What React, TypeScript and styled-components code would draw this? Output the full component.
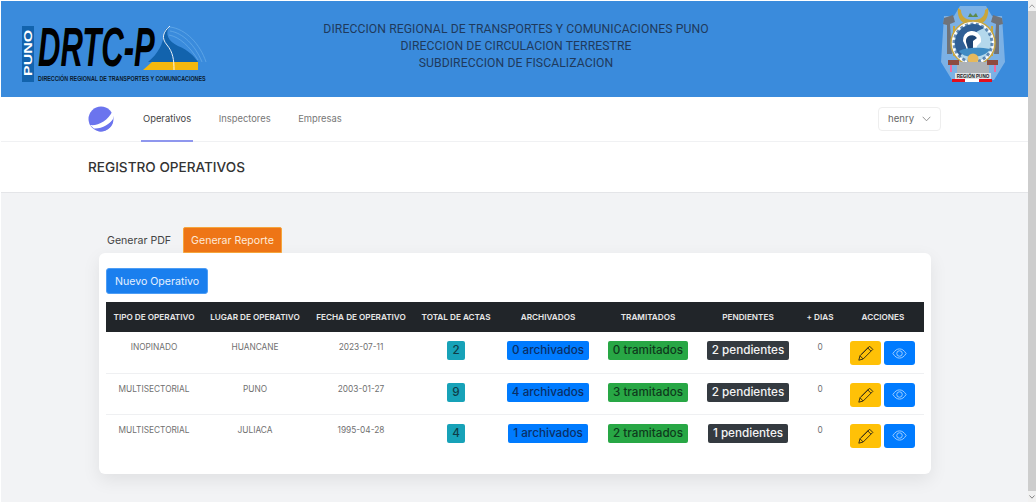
import styled, { createGlobalStyle } from 'styled-components'

const GlobalStyle = createGlobalStyle`
  html, body {
    margin: 0;
    padding: 0;
    overflow: hidden;
    background: #fff;
  }
  * { box-sizing: border-box; }
`

const Screen = styled.div`
  display: flex;
  width: 1036px;
  height: 502px;
  font-family: Inter, 'Noto Sans', sans-serif;
`

const Main = styled.div`
  flex: 1;
  min-width: 0;
  padding: 1px 0 0 1px;
  display: flex;
  flex-direction: column;
`

const ScrollRail = styled.div`
  width: 8px;
  background: #f1f1f1;
  display: flex;
  flex-direction: column;
`

const ScrollArrow = styled.div`
  height: 11px;
  display: flex;
  align-items: center;
  justify-content: center;
`

const ScrollThumb = styled.div`
  flex: 1;
  background: #cdcdcd;
`

const Banner = styled.header`
  height: 96px;
  background: #3a8bdc;
  display: flex;
  align-items: center;
  padding: 0 22px 0 21px;
`

const LogoBox = styled.div`
  display: flex;
  padding-bottom: 2px;
`

const CrestBox = styled.div`
  display: flex;
  padding-bottom: 12px;
`

const BannerText = styled.div`
  flex: 1;
  padding: 0 116px 6px 0;
  text-align: center;
  font-family: Roboto, sans-serif;
  font-size: 12.2px;
  line-height: 17px;
  letter-spacing: 0.08px;
  color: #1f3a5c;
`

const Nav = styled.nav`
  height: 45px;
  background: #fff;
  border-bottom: 1px solid #f0f1f3;
  display: flex;
  align-items: stretch;
  padding: 0 87px;
`

const NavLogo = styled.div`
  display: flex;
  align-items: center;
  margin-right: 27px;
  padding-bottom: 1px;
`

const NavTabs = styled.div`
  display: flex;
  flex: 1;
`

const NavTab = styled.a<{ $active?: boolean }>`
  display: flex;
  align-items: center;
  padding: 0 2px;
  margin-right: 23.5px;
  margin-bottom: -1px;
  font-size: 9.4px;
  color: ${(p) => (p.$active ? '#444' : '#777')};
  border-bottom: 2px solid ${(p) => (p.$active ? '#8f97ee' : 'transparent')};
`

const UserSelect = styled.div`
  align-self: center;
  width: 63px;
  height: 24px;
  margin-top: -1px;
  border: 1px solid #eeeeee;
  border-radius: 4px;
  display: flex;
  align-items: center;
  justify-content: center;
  gap: 8px;
  font-size: 9.6px;
  color: #666;
`

const TitleBar = styled.div`
  height: 51px;
  background: #fff;
  border-bottom: 1px solid #e4e5e8;
  display: flex;
  align-items: center;
  padding-left: 87px;
  font-size: 13.6px;
  font-weight: 500;
  color: #333;
`

const Body = styled.main`
  flex: 1;
  background: #f2f3f5;
  padding: 34px 97px 0 98px;
`

const Tabs = styled.div`
  display: flex;
  align-items: stretch;
  height: 26px;
  padding-left: 8px;
`

const PlainTab = styled.div`
  display: flex;
  align-items: center;
  width: 76px;
  font-size: 10.6px;
  color: #444;
`

const ReportTab = styled.div`
  display: flex;
  align-items: center;
  justify-content: center;
  width: 99px;
  background: #ee7516;
  border: 1px solid #f5a53c;
  border-radius: 2px 2px 0 0;
  font-size: 10.6px;
  color: #fde9d6;
`

const Card = styled.section`
  height: 221px;
  background: #fff;
  border-radius: 6px;
  padding: 15px 7px 0;
  box-shadow: 0 6px 18px rgba(0, 0, 0, 0.08);
`

const NewButton = styled.button`
  display: block;
  width: 102px;
  height: 26px;
  padding: 0;
  background: #1a7fee;
  border: 1px solid #4d9df5;
  border-radius: 3px;
  font-family: inherit;
  font-size: 10.6px;
  color: #e4f0ff;
`

const Table = styled.table`
  width: 818px;
  margin-top: 8px;
  border-collapse: collapse;
  table-layout: fixed;
`

const HeadCell = styled.th`
  height: 30px;
  padding: 0;
  background: #212529;
  font-size: 8.2px;
  font-weight: 600;
  color: #e8e8e8;
  text-align: center;
`

const Row = styled.tr`
  height: 41px;
  border-bottom: 1px solid #eff0f2;

  &:last-child {
    border-bottom: none;
  }
`

const Cell = styled.td`
  padding: 9px 0 0;
  font-size: 8.3px;
  line-height: 12px;
  color: #707070;
  text-align: center;
  vertical-align: top;
`

const Badge = styled.span<{ $bg: string; $fg: string }>`
  display: inline-block;
  height: 19px;
  padding: 0 5px;
  background: ${(p) => p.$bg};
  border-radius: 2px;
  font-size: 11.7px;
  font-weight: 500;
  line-height: 19px;
  color: ${(p) => p.$fg};
  white-space: nowrap;
`

const Actions = styled.div`
  display: flex;
  gap: 3px;
  padding-left: 8px;
`

const IconButton = styled.button<{ $bg: string }>`
  display: flex;
  align-items: center;
  justify-content: center;
  width: 31px;
  height: 24px;
  padding: 0;
  border: none;
  border-radius: 3px;
  background: ${(p) => p.$bg};
`

const DrtcLogo = () => (
  <svg width="186" height="68" viewBox="0 -12 186 68">
    <rect x="0" y="0" width="12" height="56" fill="#1263ad" />
    <text
      transform="translate(10 50) rotate(-90) scale(1.45 1)"
      fontFamily="Liberation Sans"
      fontWeight="700"
      fontSize="11"
      fill="#fff"
    >
      PUNO
    </text>
    <g fill="none" stroke="#69aeea" strokeWidth="0.7">
      <path d="M148 1 C164 3 178 18 184 36" />
      <path d="M148 5 C161 7 173 19 180 36" />
      <path d="M147 9 C158 11 168 21 176 34" />
    </g>
    <path d="M126 36 C136 28 142 16 141 10 C142 5 144 2 147 1 C143 8 146 15 156 20 C166 24 172 30 176 36 Z" fill="#1263ad" />
    <path d="M121 44 L130 36 L176 36 L176 44 Z" fill="#f4b80f" />
    <path d="M148 0 C141 6 139 12 145 19 C151 26 152 34 152 44" fill="none" stroke="#fff" strokeWidth="0.9" />
    <text
      transform="translate(16 40) scale(0.555 1)"
      fontFamily="Liberation Sans"
      fontWeight="700"
      fontStyle="italic"
      fontSize="56"
      fill="#000"
    >
      DRTC-P
    </text>
    <text
      transform="translate(16 55) scale(0.77 1)"
      fontFamily="Liberation Sans"
      fontWeight="700"
      fontSize="7"
      fill="#0b1c30"
    >
      DIRECCIÓN REGIONAL DE TRANSPORTES Y COMUNICACIONES
    </text>
  </svg>
)

const Crest = () => (
  <svg width="66" height="78" viewBox="0 0 66 78">
    <path d="M4 12 L14 12 L20 2 L46 2 L52 12 L62 12 L65 58 L54 76 L12 76 L1 58 Z" fill="#e2eaf2" opacity="0.4" />
    <path d="M18 4 C17 12 20 18 26 20 C31 22 35 22 40 20 C46 18 49 12 48 4 L45 6 C45 12 41 16 33 16 C25 16 21 12 21 6 Z" fill="#c9a63a" />
    <path d="M28 13 L30 9 L33 12 L36 9 L38 13 Z" fill="#5d8a4a" />
    <path d="M4 14 L13 11 L15 18 L10 20 L12 50 L7 50 L7 21 L3 20 Z" fill="#6f737a" />
    <path d="M62 14 L53 11 L51 18 L56 20 L54 50 L59 50 L59 21 L63 20 Z" fill="#6f737a" />
    <rect x="13" y="22" width="2" height="30" fill="#c9a63a" />
    <rect x="51" y="22" width="2" height="30" fill="#c9a63a" />
    <circle cx="33" cy="39" r="22" fill="#fff" stroke="#c4a544" strokeWidth="1.5" />
    <circle cx="33" cy="39" r="19" fill="#b4d8ec" />
    <path d="M33 20 A19 19 0 0 0 20 52 L26 46 L27 34 L38 27 L44 24 A19 19 0 0 0 33 20 Z" fill="#2f5f96" />
    <circle cx="33" cy="39" r="19" fill="none" stroke="#2f5f96" strokeWidth="3" strokeDasharray="3 2.4" opacity="0.7" />
    <path d="M23 37 A9 9 0 0 1 41 35 L41 38 L37 42 L36 47 L28 47 Z" fill="#fff" />
    <path d="M26 38 A6 6 0 0 1 37 34 L33 37 L33 45 L28 45 Z" fill="#1e4574" />
    <path d="M19 47 C26 43 40 43 50 45 C46 54 24 56 19 47 Z" fill="#3f8cc4" />
    <circle cx="33" cy="55" r="5.5" fill="#e6b95c" />
    <rect x="17" y="58" width="32" height="11" fill="#aeb2b6" />
    <rect x="8" y="56" width="11" height="5" fill="#8d4b3f" />
    <rect x="47" y="56" width="11" height="5" fill="#8d4b3f" />
    <rect x="10" y="61" width="2" height="7" fill="#f06aa0" />
    <rect x="54" y="61" width="2" height="7" fill="#f06aa0" />
    <rect x="15" y="69" width="36" height="6" fill="#dfe3e6" />
    <text x="33" y="74" textAnchor="middle" fontFamily="Liberation Sans" fontSize="4.6" fontWeight="700" fill="#222">
      REGIÓN PUNO
    </text>
    <rect x="12" y="75" width="13" height="3" fill="#e3101c" />
    <rect x="25" y="75" width="14" height="3" fill="#fff" />
    <rect x="39" y="75" width="13" height="3" fill="#e3101c" />
  </svg>
)

const PlanetLogo = () => (
  <svg width="26" height="26" viewBox="0 0 26 26">
    <circle cx="13" cy="13" r="12.5" fill="#6b74ee" />
    <path d="M2 19 C10 20 20 15 24.5 5 C26.5 9 25 13 25 13 C22 18 14 23 6 22.5 Z" fill="#fff" />
    <path d="M9 24.8 C15 23 21 19 25 14 C25 20 18 26 12 25.5 Z" fill="#6b74ee" />
  </svg>
)

const Chevron = () => (
  <svg width="9" height="6" viewBox="0 0 9 6" fill="none" stroke="#888" strokeWidth="0.9">
    <path d="M0.7 0.8 L4.5 4.8 L8.3 0.8" />
  </svg>
)

const ScrollUp = () => (
  <svg width="6" height="4" viewBox="0 0 6 4" fill="none" stroke="#888" strokeWidth="0.8">
    <path d="M0.5 3.5 L3 0.8 L5.5 3.5" />
  </svg>
)

const ScrollDown = () => (
  <svg width="6" height="4" viewBox="0 0 6 4" fill="none" stroke="#666" strokeWidth="0.8">
    <path d="M0.5 0.5 L3 3.2 L5.5 0.5" />
  </svg>
)

const Pencil = () => (
  <svg width="16" height="16" viewBox="0 0 16 16" fill="none" stroke="#3b3216" strokeWidth="1" strokeLinejoin="round">
    <path d="M0.8 15.2 L2 10.8 L11.6 1.2 L14.8 4.4 L5.2 14 Z" />
    <path d="M2 10.8 L5.2 14 M9.8 3 L13 6.2 M3.6 9.2 L10.7 2.1" />
  </svg>
)

const Eye = () => (
  <svg width="15" height="11" viewBox="0 0 16 12" fill="none" stroke="#a9d3ff" strokeWidth="1">
    <path d="M0.8 6 C3 2.4 5.4 1 8 1 C10.6 1 13 2.4 15.2 6 C13 9.6 10.6 11 8 11 C5.4 11 3 9.6 0.8 6 Z" />
    <circle cx="8" cy="6" r="3" />
  </svg>
)

const columns = [96, 106, 106, 84, 100, 100, 100, 44, 82]

const headers = [
  'TIPO DE OPERATIVO',
  'LUGAR DE OPERATIVO',
  'FECHA DE OPERATIVO',
  'TOTAL DE ACTAS',
  'ARCHIVADOS',
  'TRAMITADOS',
  'PENDIENTES',
  '+ DIAS',
  'ACCIONES',
]

const rows = [
  { tipo: 'INOPINADO', lugar: 'HUANCANE', fecha: '2023-07-11', total: 2, archivados: 0, tramitados: 0, pendientes: 2 },
  { tipo: 'MULTISECTORIAL', lugar: 'PUNO', fecha: '2003-01-27', total: 9, archivados: 4, tramitados: 3, pendientes: 2 },
  { tipo: 'MULTISECTORIAL', lugar: 'JULIACA', fecha: '1995-04-28', total: 4, archivados: 1, tramitados: 2, pendientes: 1 },
]

const App = () => {
  return (
    <Screen>
      <GlobalStyle />
      <Main>
        <Banner>
          <LogoBox>
            <DrtcLogo />
          </LogoBox>
          <BannerText>
            DIRECCION REGIONAL DE TRANSPORTES Y COMUNICACIONES PUNO
            <br />
            DIRECCION DE CIRCULACION TERRESTRE
            <br />
            SUBDIRECCION DE FISCALIZACION
          </BannerText>
          <CrestBox>
            <Crest />
          </CrestBox>
        </Banner>
        <Nav>
          <NavLogo>
            <PlanetLogo />
          </NavLogo>
          <NavTabs>
            <NavTab $active>Operativos</NavTab>
            <NavTab>Inspectores</NavTab>
            <NavTab>Empresas</NavTab>
          </NavTabs>
          <UserSelect>
            henry <Chevron />
          </UserSelect>
        </Nav>
        <TitleBar>REGISTRO OPERATIVOS</TitleBar>
        <Body>
          <Tabs>
            <PlainTab>Generar PDF</PlainTab>
            <ReportTab>Generar Reporte</ReportTab>
          </Tabs>
          <Card>
            <NewButton>Nuevo Operativo</NewButton>
            <Table>
              <colgroup>
                {columns.map((width, i) => (
                  <col key={i} width={width} />
                ))}
              </colgroup>
              <thead>
                <tr>
                  {headers.map((header) => (
                    <HeadCell key={header}>{header}</HeadCell>
                  ))}
                </tr>
              </thead>
              <tbody>
                {rows.map((row) => (
                  <Row key={row.fecha}>
                    <Cell>{row.tipo}</Cell>
                    <Cell>{row.lugar}</Cell>
                    <Cell>{row.fecha}</Cell>
                    <Cell>
                      <Badge $bg="#17a2b8" $fg="#0f3d48">{row.total}</Badge>
                    </Cell>
                    <Cell>
                      <Badge $bg="#007bff" $fg="#0a2f66">{row.archivados} archivados</Badge>
                    </Cell>
                    <Cell>
                      <Badge $bg="#28a745" $fg="#0e3a1c">{row.tramitados} tramitados</Badge>
                    </Cell>
                    <Cell>
                      <Badge $bg="#343a40" $fg="#f4f4f4">{row.pendientes} pendientes</Badge>
                    </Cell>
                    <Cell>0</Cell>
                    <Cell>
                      <Actions>
                        <IconButton $bg="#ffc107"><Pencil /></IconButton>
                        <IconButton $bg="#007bff"><Eye /></IconButton>
                      </Actions>
                    </Cell>
                  </Row>
                ))}
              </tbody>
            </Table>
          </Card>
        </Body>
      </Main>
      <ScrollRail>
        <ScrollArrow><ScrollUp /></ScrollArrow>
        <ScrollThumb />
        <ScrollArrow><ScrollDown /></ScrollArrow>
      </ScrollRail>
    </Screen>
  )
}

export default App
